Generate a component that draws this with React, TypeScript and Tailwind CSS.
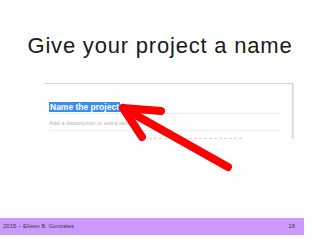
import React from "react";

export default function App() {
  return (
    <div
      className="relative w-[320px] h-[240px] bg-white overflow-hidden flex flex-col"
      style={{ fontFamily: '"Liberation Sans", Arial, sans-serif' }}
    >
      <h1 className="mt-[32px] h-[28px] text-center text-[22px] leading-[28px] tracking-[0.8px] font-normal text-[#1a1a1a]">
        Give your project a name
      </h1>

      {/* screenshot of the project form */}
      <div className="mt-[23px] ml-[44px] w-[249px] h-[56px] border-t border-r border-[#d9d5cc] shadow-[1px_0_0_#ebe8e2] bg-white pl-[5px] pr-[12px] pt-[18px] flex flex-col">
        <div className="flex">
          <span className="bg-[#3a8ef0] text-white font-bold text-[8.5px] leading-[10px] px-[1px]">
            Name the project
          </span>
        </div>
        <div className="mt-[1px] h-px bg-[#ececec]" />
        <div className="mt-[5px] text-[6px] leading-[8px] text-[#b5b5b5]">
          Add a description or extra details
        </div>
        <div className="mt-[3px] h-px bg-[#eeeeee]" />
        <div className="mt-[8px] ml-[100px] w-[93px] border-t border-dashed border-[#f6c9c9]" />
      </div>

      <div className="flex-1" />

      <footer className="mb-[5px] w-[304px] h-[17px] bg-[#cc99ff] flex items-center justify-between pl-[3px] pr-[9px] text-[6px] text-[#3a3a3a]">
        <span>2015 – Eileen B. Gonzales</span>
        <span>18</span>
      </footer>

      {/* red arrow over the screenshot */}
      <svg
        className="absolute left-0 top-0 pointer-events-none"
        width="320"
        height="240"
        viewBox="0 0 320 240"
      >
        <g stroke="#ff0000" strokeWidth="8" strokeLinecap="round" strokeLinejoin="round" fill="none">
          <line x1="228" y1="167" x2="123" y2="108" />
          <line x1="123" y1="108" x2="161" y2="111" />
          <line x1="123" y1="108" x2="142" y2="137" />
        </g>
      </svg>
    </div>
  );
}
